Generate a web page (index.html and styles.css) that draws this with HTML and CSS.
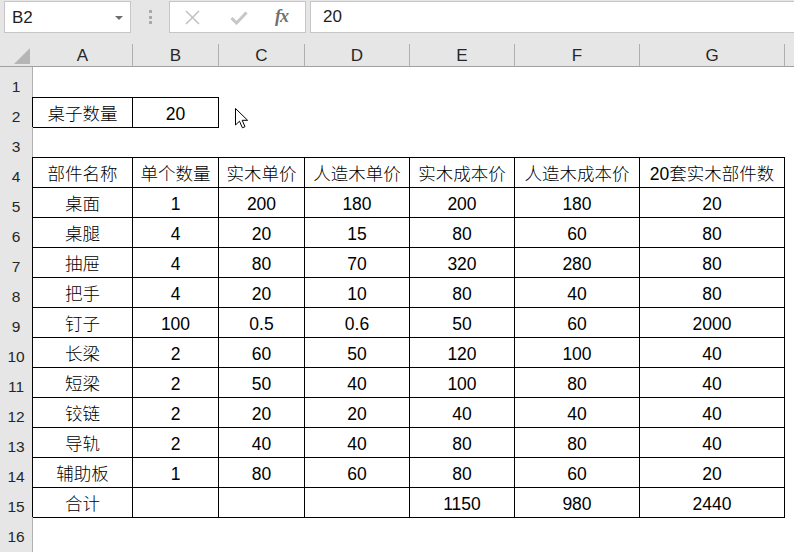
FILE: index.html
```html
<!DOCTYPE html>
<html lang="zh-CN">
<head>
<meta charset="utf-8">
<title>Excel</title>
<link rel="stylesheet" href="styles.css">
</head>
<body>
<div class="app">
  <div class="toolbar">
    <div class="namebox"><span class="nb-text">B2</span><span class="dd"></span></div>
    <div class="grip"><i></i><i></i><i></i></div>
    <div class="btns">
      <svg class="ic-x" width="15" height="15" viewBox="0 0 15 15"><path d="M1 1L14 14M14 1L1 14" stroke="#c3c3c3" stroke-width="1.6" fill="none"/></svg>
      <svg class="ic-ok" width="18" height="14" viewBox="0 0 18 14"><path d="M1.5 7L6.5 12L16.5 1.5" stroke="#c6c6c6" stroke-width="3" fill="none"/></svg>
      <span class="fx">fx</span>
    </div>
    <div class="formula">20</div>
  </div>
  <div class="sheet">
    <div class="row hdr">
      <div class="corner"><svg width="16" height="16" viewBox="0 0 16 16"><polygon points="16,0 16,16 0,16" fill="#b5b5b5"/></svg></div>
      <div class="ch">A</div><div class="ch">B</div><div class="ch">C</div><div class="ch">D</div><div class="ch">E</div><div class="ch">F</div><div class="ch">G</div><div class="ch"></div>
    </div>
    <div class="row">
      <div class="rh">1</div>
      <div class="c bb"></div><div class="c bb"></div><div class="c"></div><div class="c"></div><div class="c"></div><div class="c"></div><div class="c"></div><div class="c"></div>
    </div>
    <div class="row">
      <div class="rh k">2</div>
      <div class="c bd">桌子数量</div><div class="c bd">20</div><div class="c"></div><div class="c"></div><div class="c"></div><div class="c"></div><div class="c"></div><div class="c"></div>
    </div>
    <div class="row">
      <div class="rh">3</div>
      <div class="c bb"></div><div class="c bb"></div><div class="c bb"></div><div class="c bb"></div><div class="c bb"></div><div class="c bb"></div><div class="c bb"></div><div class="c"></div>
    </div>
    <div class="row">
      <div class="rh k">4</div>
      <div class="c bd">部件名称</div><div class="c bd">单个数量</div><div class="c bd">实木单价</div><div class="c bd">人造木单价</div><div class="c bd">实木成本价</div><div class="c bd">人造木成本价</div><div class="c bd">20套实木部件数</div><div class="c"></div>
    </div>
    <div class="row">
      <div class="rh k">5</div>
      <div class="c bd">桌面</div><div class="c bd">1</div><div class="c bd">200</div><div class="c bd">180</div><div class="c bd">200</div><div class="c bd">180</div><div class="c bd">20</div><div class="c"></div>
    </div>
    <div class="row">
      <div class="rh k">6</div>
      <div class="c bd">桌腿</div><div class="c bd">4</div><div class="c bd">20</div><div class="c bd">15</div><div class="c bd">80</div><div class="c bd">60</div><div class="c bd">80</div><div class="c"></div>
    </div>
    <div class="row">
      <div class="rh k">7</div>
      <div class="c bd">抽屉</div><div class="c bd">4</div><div class="c bd">80</div><div class="c bd">70</div><div class="c bd">320</div><div class="c bd">280</div><div class="c bd">80</div><div class="c"></div>
    </div>
    <div class="row">
      <div class="rh k">8</div>
      <div class="c bd">把手</div><div class="c bd">4</div><div class="c bd">20</div><div class="c bd">10</div><div class="c bd">80</div><div class="c bd">40</div><div class="c bd">80</div><div class="c"></div>
    </div>
    <div class="row">
      <div class="rh k">9</div>
      <div class="c bd">钉子</div><div class="c bd">100</div><div class="c bd">0.5</div><div class="c bd">0.6</div><div class="c bd">50</div><div class="c bd">60</div><div class="c bd">2000</div><div class="c"></div>
    </div>
    <div class="row">
      <div class="rh k">10</div>
      <div class="c bd">长梁</div><div class="c bd">2</div><div class="c bd">60</div><div class="c bd">50</div><div class="c bd">120</div><div class="c bd">100</div><div class="c bd">40</div><div class="c"></div>
    </div>
    <div class="row">
      <div class="rh k">11</div>
      <div class="c bd">短梁</div><div class="c bd">2</div><div class="c bd">50</div><div class="c bd">40</div><div class="c bd">100</div><div class="c bd">80</div><div class="c bd">40</div><div class="c"></div>
    </div>
    <div class="row">
      <div class="rh k">12</div>
      <div class="c bd">铰链</div><div class="c bd">2</div><div class="c bd">20</div><div class="c bd">20</div><div class="c bd">40</div><div class="c bd">40</div><div class="c bd">40</div><div class="c"></div>
    </div>
    <div class="row">
      <div class="rh k">13</div>
      <div class="c bd">导轨</div><div class="c bd">2</div><div class="c bd">40</div><div class="c bd">40</div><div class="c bd">80</div><div class="c bd">80</div><div class="c bd">40</div><div class="c"></div>
    </div>
    <div class="row">
      <div class="rh k">14</div>
      <div class="c bd">辅助板</div><div class="c bd">1</div><div class="c bd">80</div><div class="c bd">60</div><div class="c bd">80</div><div class="c bd">60</div><div class="c bd">20</div><div class="c"></div>
    </div>
    <div class="row">
      <div class="rh k">15</div>
      <div class="c bd">合计</div><div class="c bd"></div><div class="c bd"></div><div class="c bd"></div><div class="c bd">1150</div><div class="c bd">980</div><div class="c bd">2440</div><div class="c"></div>
    </div>
    <div class="row">
      <div class="rh">16</div>
      <div class="c"></div><div class="c"></div><div class="c"></div><div class="c"></div><div class="c"></div><div class="c"></div><div class="c"></div><div class="c"></div>
    </div>
    <div class="row">
      <div class="rh"></div>
      <div class="c"></div><div class="c"></div><div class="c"></div><div class="c"></div><div class="c"></div><div class="c"></div><div class="c"></div><div class="c"></div>
    </div>
  </div>
  <svg class="cursor" width="14" height="21" viewBox="0 0 14 21"><path d="M0.5 0.5V17L4.5 13.2L7.4 19.8L10 18.7L7.2 12.3H12.6Z" fill="#fff" stroke="#000" stroke-width="1" stroke-linejoin="miter"/></svg>
</div>
</body>
</html>
```

FILE: styles.css
```css
* { box-sizing: border-box; }
html, body { margin: 0; padding: 0; background: #fff; }
.app {
  position: relative;
  width: 794px;
  height: 552px;
  overflow: hidden;
  font-family: "Liberation Sans", "Noto Sans CJK SC", sans-serif;
}
.toolbar {
  height: 44px;
  background: #e6e6e6;
  display: flex;
  align-items: flex-start;
  padding: 1px 0 0 4px;
}
.namebox {
  width: 127px;
  height: 32px;
  background: #fff;
  border: 1px solid #c6c6c6;
  display: flex;
  align-items: center;
  justify-content: space-between;
  padding: 0 7px 0 7px;
  font-size: 17px;
  color: #1e1e1e;
}
.nb-text { padding-top: 1px; }
.dd {
  width: 0; height: 0;
  border-left: 4px solid transparent;
  border-right: 4px solid transparent;
  border-top: 4px solid #6e6e6e;
  margin-top: 1px;
}
.grip {
  width: 38px;
  height: 32px;
  display: flex;
  flex-direction: column;
  align-items: center;
  gap: 2.5px;
  padding-top: 9px;
}
.grip i {
  display: block;
  width: 3px;
  height: 3px;
  background: #a9a9a9;
}
.btns {
  width: 137px;
  height: 32px;
  background: #fff;
  border: 1px solid #c6c6c6;
  display: flex;
  align-items: center;
  padding-left: 15px;
}
.ic-x { margin-top: 1px; }
.ic-ok { margin-left: 30px; margin-top: 1px; }
.fx {
  margin-left: 27px;
  font-family: "Liberation Serif", serif;
  font-style: italic;
  font-weight: bold;
  font-size: 18px;
  color: #707070;
  letter-spacing: -1px;
  padding-bottom: 2px;
}
.formula {
  flex: 1;
  margin-left: 4px;
  height: 32px;
  background: #fff;
  border: 1px solid #c6c6c6;
  border-right: none;
  padding: 5px 0 0 12px;
  font-size: 17px;
  color: #1e1e1e;
}
.sheet { display: flex; flex-direction: column; }
.row {
  display: grid;
  grid-template-columns: 33px 100px 86px 86px 105px 105px 125px 145px 1fr;
  height: 30px;
}
.row.hdr { height: 23px; background: #e6e6e6; }
.corner {
  border-bottom: 1px solid #a0a0a0;
  padding: 4px 0 0 14px;
}
.corner svg { display: block; }
.ch {
  border-right: 1px solid #b0b0b0;
  border-bottom: 1px solid #a0a0a0;
  text-align: center;
  font-size: 17px;
  line-height: 20px;
  padding-top: 2px;
  color: #262626;
}
.ch:last-child { border-right: none; }
.rh {
  background: #e6e6e6;
  border-right: 1px solid #b0b0b0;
  border-bottom: 1px solid #d2d2d2;
  text-align: center;
  font-size: 15.5px;
  line-height: 20px;
  padding-top: 10px;
  color: #262626;
}
.rh.k { border-right-color: #000; }
.c {
  text-align: center;
  font-size: 17.5px;
  font-weight: 300;
  line-height: 24px;
  padding-top: 5px;
  color: #000;
  white-space: nowrap;
  overflow: hidden;
}
.c.bb { border-bottom: 1px solid #000; }
.c.bd { border-right: 1px solid #000; border-bottom: 1px solid #000; }
.cursor {
  position: absolute;
  left: 235px;
  top: 108px;
}
```
